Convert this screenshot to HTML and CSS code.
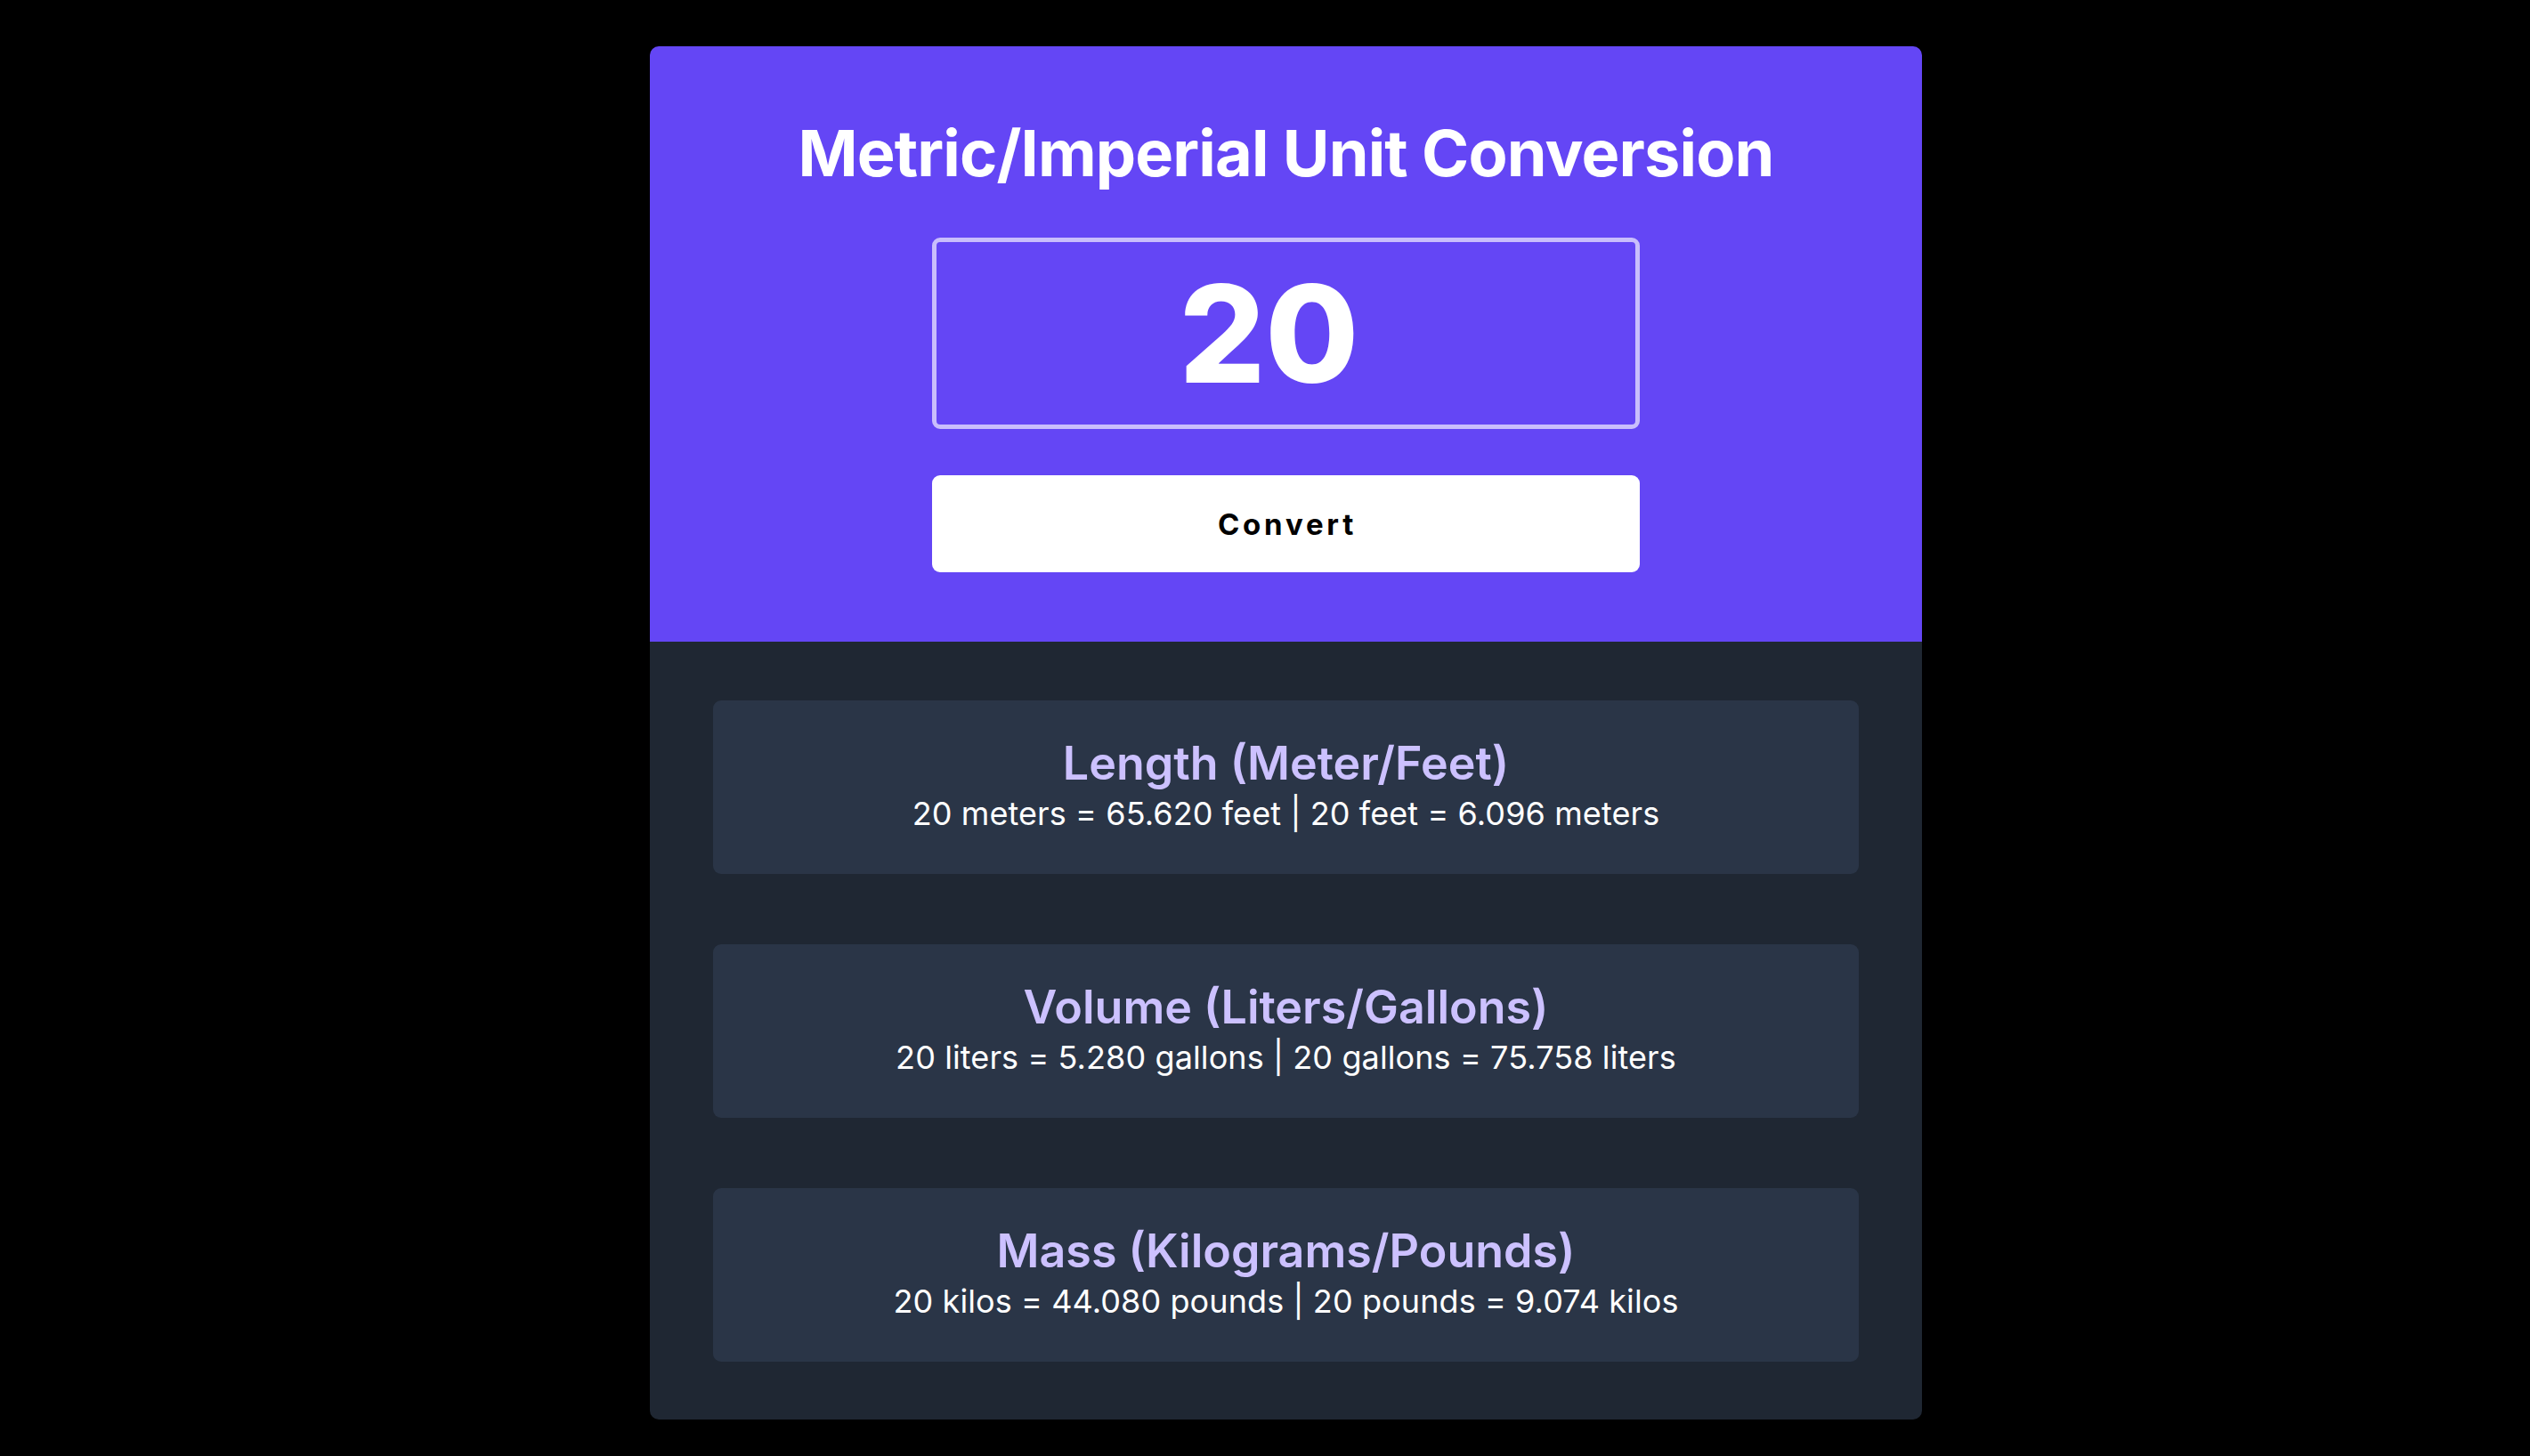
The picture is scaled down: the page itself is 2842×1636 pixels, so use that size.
FILE: index.html
```html
<!DOCTYPE html>
<html lang="en">
<head>
<meta charset="utf-8">
<title>Metric/Imperial Unit Conversion</title>
<link rel="stylesheet" href="styles.css">
</head>
<body>
<div class="page">
  <main class="converter">
    <section class="top">
      <h1 class="title">Metric/Imperial Unit Conversion</h1>
      <input class="value-input" type="text" value="20">
      <button class="convert-btn" type="button">Convert</button>
    </section>
    <section class="results">
      <div class="result-card">
        <h2 class="result-title">Length (Meter/Feet)</h2>
        <p class="result-text">20 meters = 65.620 feet | 20 feet = 6.096 meters</p>
      </div>
      <div class="result-card">
        <h2 class="result-title">Volume (Liters/Gallons)</h2>
        <p class="result-text">20 liters = 5.280 gallons | 20 gallons = 75.758 liters</p>
      </div>
      <div class="result-card">
        <h2 class="result-title">Mass (Kilograms/Pounds)</h2>
        <p class="result-text">20 kilos = 44.080 pounds | 20 pounds = 9.074 kilos</p>
      </div>
    </section>
  </main>
</div>
</body>
</html>
```
FILE: styles.css
```css
* { box-sizing: border-box; }
html, body {
  margin: 0;
  background: #000;
}
body {
  font-family: Inter, "Noto Sans", "Liberation Sans", sans-serif;
}
.page {
  display: flex;
  justify-content: center;
  padding: 52px 0 0 47px;
}
.converter {
  width: 1429px;
  border-radius: 10px;
  overflow: hidden;
}
.top {
  background: #6446f5;
  padding: 84px 0 78px;
  display: flex;
  flex-direction: column;
  align-items: center;
}
.title {
  margin: 0;
  color: #fff;
  font-size: 72px;
  line-height: 1;
  font-weight: 700;
  letter-spacing: -0.85px;
}
.value-input {
  margin-top: 59px;
  width: 795px;
  height: 215px;
  border: 5px solid #c9befc;
  border-radius: 9px;
  background: transparent;
  color: #fff;
  font-family: Inter, "Noto Sans", sans-serif;
  font-size: 152px;
  font-weight: 800;
  text-align: center;
  padding: 0 38px 0 0;
  outline: none;
}
.convert-btn {
  margin-top: 52px;
  width: 795px;
  height: 109px;
  border: none;
  border-radius: 9px;
  background: #fff;
  color: #000;
  font-family: Inter, "Noto Sans", sans-serif;
  font-size: 33px;
  font-weight: 700;
  letter-spacing: 3.8px;
  padding: 0 0 0 3px;
}
.results {
  background: #1f2733;
  padding: 66px 71px 65px;
  display: flex;
  flex-direction: column;
  gap: 79px;
}
.result-card {
  height: 195px;
  background: #2a3547;
  border-radius: 9px;
  padding-top: 45px;
  display: flex;
  flex-direction: column;
  align-items: center;
  gap: 12px;
}
.result-title {
  margin: 0;
  color: #ccc1ff;
  font-size: 52px;
  line-height: 1;
  font-weight: 600;
}
.result-text {
  margin: 0;
  color: #fff;
  font-size: 36px;
  line-height: 1;
  font-weight: 400;
  letter-spacing: 0.1px;
}
```
